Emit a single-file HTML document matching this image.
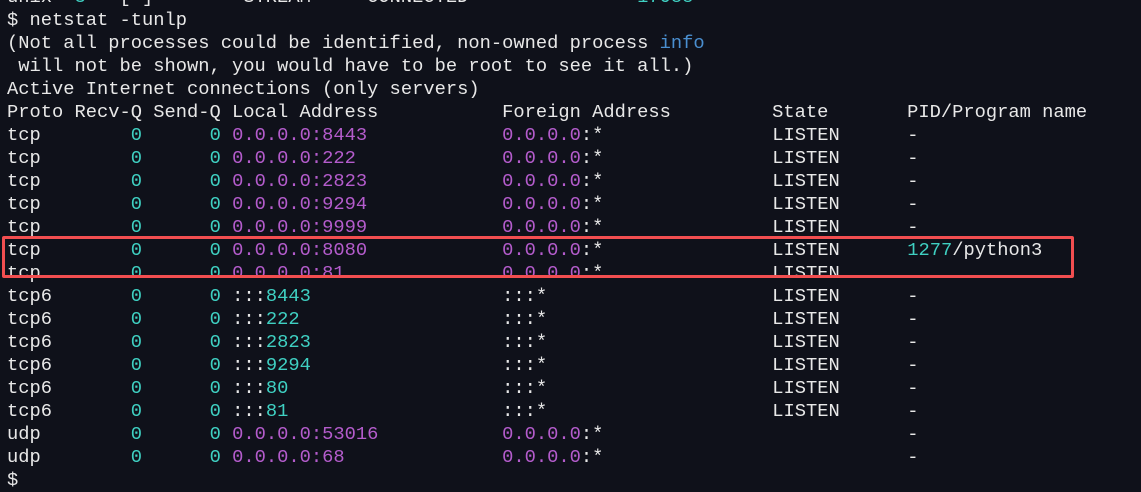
<!DOCTYPE html>
<html><head><meta charset="utf-8"><style>
html,body{margin:0;padding:0;background:#0f111a;width:1141px;height:486px;overflow:hidden}
pre{position:absolute;left:7px;top:-14.5px;margin:0;font-family:"Liberation Mono",monospace;font-size:18.75px;line-height:23px;color:#e8e8e8;white-space:pre}
.c{color:#3fd0c2}.p{color:#b45ccc}.b{color:#4a8fd0}
.box{position:absolute;left:2px;top:236px;width:1066px;height:36px;border:3px solid #f24e50;border-radius:2px}
</style></head><body>
<pre>unix  <span class="c">3</span>   [ ]        STREAM     CONNECTED               <span class="c">17088</span>
$ netstat -tunlp
(Not all processes could be identified, non-owned process <span class="b">info</span>
 will not be shown, you would have to be root to see it all.)
Active Internet connections (only servers)
Proto Recv-Q Send-Q Local Address           Foreign Address         State       PID/Program name
tcp        <span class="c">0</span>      <span class="c">0</span> <span class="p">0.0.0.0:8443</span>            <span class="p">0.0.0.0</span>:*               LISTEN      -
tcp        <span class="c">0</span>      <span class="c">0</span> <span class="p">0.0.0.0:222</span>             <span class="p">0.0.0.0</span>:*               LISTEN      -
tcp        <span class="c">0</span>      <span class="c">0</span> <span class="p">0.0.0.0:2823</span>            <span class="p">0.0.0.0</span>:*               LISTEN      -
tcp        <span class="c">0</span>      <span class="c">0</span> <span class="p">0.0.0.0:9294</span>            <span class="p">0.0.0.0</span>:*               LISTEN      -
tcp        <span class="c">0</span>      <span class="c">0</span> <span class="p">0.0.0.0:9999</span>            <span class="p">0.0.0.0</span>:*               LISTEN      -
tcp        <span class="c">0</span>      <span class="c">0</span> <span class="p">0.0.0.0:8080</span>            <span class="p">0.0.0.0</span>:*               LISTEN      <span class="c">1277</span>/python3
tcp        <span class="c">0</span>      <span class="c">0</span> <span class="p">0.0.0.0:81</span>              <span class="p">0.0.0.0</span>:*               LISTEN
tcp6       <span class="c">0</span>      <span class="c">0</span> :::<span class="c">8443</span>                 :::*                    LISTEN      -
tcp6       <span class="c">0</span>      <span class="c">0</span> :::<span class="c">222</span>                  :::*                    LISTEN      -
tcp6       <span class="c">0</span>      <span class="c">0</span> :::<span class="c">2823</span>                 :::*                    LISTEN      -
tcp6       <span class="c">0</span>      <span class="c">0</span> :::<span class="c">9294</span>                 :::*                    LISTEN      -
tcp6       <span class="c">0</span>      <span class="c">0</span> :::<span class="c">80</span>                   :::*                    LISTEN      -
tcp6       <span class="c">0</span>      <span class="c">0</span> :::<span class="c">81</span>                   :::*                    LISTEN      -
udp        <span class="c">0</span>      <span class="c">0</span> <span class="p">0.0.0.0:53016</span>           <span class="p">0.0.0.0</span>:*                           -
udp        <span class="c">0</span>      <span class="c">0</span> <span class="p">0.0.0.0:68</span>              <span class="p">0.0.0.0</span>:*                           -
$</pre>
<div class="box"></div>
</body></html>
